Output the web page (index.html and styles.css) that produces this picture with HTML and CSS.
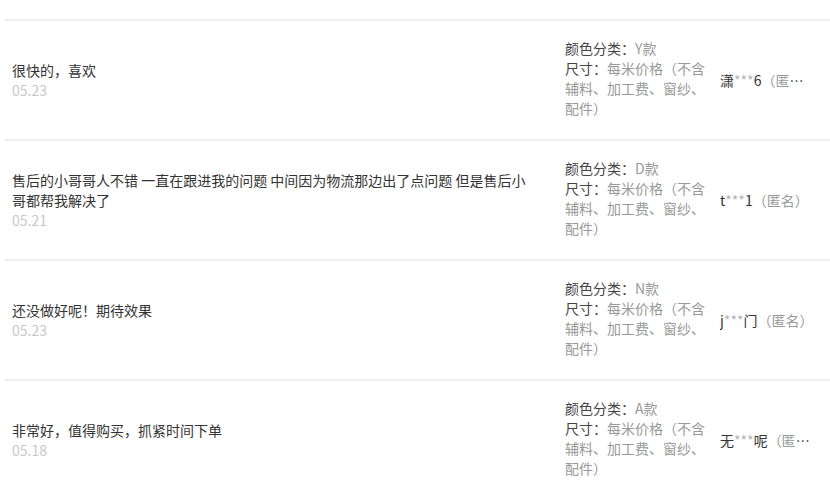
FILE: index.html
```html
<!DOCTYPE html>
<html lang="zh-CN">
<head>
  <meta charset="UTF-8" />
  <meta name="viewport" content="width=device-width, initial-scale=1.0"/>
  <title>评价列表</title>
  <link rel="stylesheet" href="styles.css">
</head>
<body>
  <div class="rate-list">
    <div class="rate-row">
      <div class="rate-content">
        <div class="rate-text">很快的，喜欢</div>
        <div class="rate-date">05.23</div>
      </div>
      <div class="rate-sku">
        <p><span class="sku-label">颜色分类：</span>Y款</p>
        <p><span class="sku-label">尺寸：</span>每米价格（不含辅料、加工费、窗纱、配件）</p>
      </div>
      <div class="rate-user">潇<span class="star">***</span>6<span class="anon">（匿名）</span></div>
    </div>

    <div class="rate-row">
      <div class="rate-content">
        <div class="rate-text">售后的小哥哥人不错 一直在跟进我的问题 中间因为物流那边出了点问题 但是售后小哥都帮我解决了</div>
        <div class="rate-date">05.21</div>
      </div>
      <div class="rate-sku">
        <p><span class="sku-label">颜色分类：</span>D款</p>
        <p><span class="sku-label">尺寸：</span>每米价格（不含辅料、加工费、窗纱、配件）</p>
      </div>
      <div class="rate-user">t<span class="star">***</span>1<span class="anon">（匿名）</span></div>
    </div>

    <div class="rate-row">
      <div class="rate-content">
        <div class="rate-text">还没做好呢！期待效果</div>
        <div class="rate-date">05.23</div>
      </div>
      <div class="rate-sku">
        <p><span class="sku-label">颜色分类：</span>N款</p>
        <p><span class="sku-label">尺寸：</span>每米价格（不含辅料、加工费、窗纱、配件）</p>
      </div>
      <div class="rate-user">j<span class="star">***</span>门<span class="anon">（匿名）</span></div>
    </div>

    <div class="rate-row">
      <div class="rate-content">
        <div class="rate-text">非常好，值得购买，抓紧时间下单</div>
        <div class="rate-date">05.18</div>
      </div>
      <div class="rate-sku">
        <p><span class="sku-label">颜色分类：</span>A款</p>
        <p><span class="sku-label">尺寸：</span>每米价格（不含辅料、加工费、窗纱、配件）</p>
      </div>
      <div class="rate-user">无<span class="star">***</span>呢<span class="anon">（匿名）</span></div>
    </div>
  </div>
</body>
</html>
```

FILE: styles.css
```css
body {
  margin: 0;
  background: #fff;
  font-family: "Microsoft YaHei", "Noto Sans CJK SC", sans-serif;
  font-size: 14px;
  line-height: 20px;
  color: #333;
  overflow: hidden;
}
.rate-list {
  padding-top: 19px;
  margin-left: 5px;
}
.rate-row {
  display: flex;
  align-items: center;
  height: 118px;
  border-top: 2px solid #eeeeee;
}
.rate-content {
  width: 522px;
  padding: 0 31px 0 7px;
}
.rate-date {
  color: #c8c8c8;
}
.rate-sku {
  width: 145px;
  color: #999;
  margin-bottom: 5px;
}
.rate-sku p {
  margin: 0;
}
.sku-label {
  color: #444;
}
.rate-user {
  margin-left: 10px;
  max-width: 94px;
  white-space: nowrap;
  overflow: hidden;
  text-overflow: ellipsis;
  color: #333;
}
.star {
  color: #b4b4b4;
}
.anon {
  color: #999;
}
```
